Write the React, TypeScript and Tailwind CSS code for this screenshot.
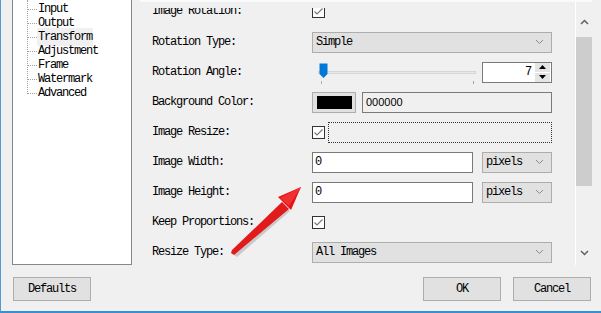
import React from "react";

function Chevron() {
  return (
    <svg width="9" height="6" viewBox="0 0 9 6" className="shrink-0">
      <polyline points="1,1 4.5,4.5 8,1" fill="none" stroke="#8a8a8a" strokeWidth="1" />
    </svg>
  );
}

function Select({ text, w }: { text: string; w: string }) {
  return (
    <div className={`${w} h-[21px] border border-[#adadad] bg-[#e1e1e1] flex items-center justify-between pl-[3px] pr-[7px]`}>
      <span>{text}</span>
      <Chevron />
    </div>
  );
}

function Check() {
  return (
    <div className="w-[13px] h-[13px] border border-[#333333] bg-white flex items-center justify-center shrink-0">
      <svg width="11" height="11" viewBox="0 0 11 11">
        <polyline points="1.5,5.5 4,8 9.5,2.5" fill="none" stroke="#7a7a7a" strokeWidth="1.2" />
      </svg>
    </div>
  );
}

function Row({ label, children }: { label: string; children?: React.ReactNode }) {
  return (
    <div className="h-[30px] flex items-center shrink-0">
      <div className="w-[160px] shrink-0">{label}</div>
      <div className="w-[240px] flex items-center">{children}</div>
    </div>
  );
}

function Btn({ text }: { text: string }) {
  return (
    <div className="w-[78px] h-[24px] border border-[#adadad] bg-[#e1e1e1] flex items-center justify-center">
      {text}
    </div>
  );
}

export default function App() {
  const tree = ["Input", "Output", "Transform", "Adjustment", "Frame", "Watermark", "Advanced"];
  return (
    <div
      className="relative w-[601px] h-[313px] bg-[#f0f0f0] overflow-hidden border-l border-l-[#4f9ad6] border-b-2 border-b-[#3a8fd0] text-black text-[12px] tracking-[-1.2px] flex flex-col"
      style={{ fontFamily: '"Liberation Mono", "DejaVu Sans Mono", monospace' }}
    >
      <div className="flex h-[265px] shrink-0">
        {/* tree */}
        <div className="ml-[11px] w-[120px] h-[265px] bg-white border border-t-0 border-[#828790] relative">
          <div className="absolute left-[14px] top-0 h-[94px] border-l border-dotted border-[#a0a0a0]" />
          <div className="pt-[2px] flex flex-col">
            {tree.map((t) => (
              <div key={t} className="h-[14px] flex items-center">
                <div className="ml-[15px] w-[9px] border-t border-dotted border-[#a0a0a0]" />
                <span className={`px-[1px] ${t === "Transform" ? "bg-[#f0f0f0]" : ""}`}>{t}</span>
              </div>
            ))}
          </div>
        </div>
        {/* options area */}
        <div className="ml-[8px] w-[452px] flex flex-col">
          <div className="h-[2px] bg-[#fafafa]" />
          <div className="flex flex-1 overflow-hidden">
            <div className="flex-1 flex flex-col">
              <div className="h-[6px] shrink-0" />
              <div className="flex-1 overflow-hidden pl-[12px] flex flex-col">
                <div className="mt-[-12px] flex flex-col">
                  <Row label="Image Rotation:">
                    <Check />
                  </Row>
                  <div className="h-[1px] shrink-0" />
                  <Row label="Rotation Type:">
                    <Select text="Simple" w="w-[240px]" />
                  </Row>
                  <Row label="Rotation Angle:">
                    <div className="w-[170px] h-[21px] relative flex items-center shrink-0">
                      <div className="ml-[6px] w-[158px] h-[3px] bg-[#e7eaea] border border-[#d6d6d6]" />
                      <svg className="absolute left-[7px] top-[1px]" width="9" height="16" viewBox="0 0 9 16">
                        <path d="M0.5 0.5 H8.5 V11 L4.5 15 L0.5 11 Z" fill="#0078d7" />
                      </svg>
                      <div className="absolute left-[9px] top-[19px] w-[1px] h-[3px] bg-[#c8a890]" />
                      <div className="absolute left-[161px] top-[19px] w-[1px] h-[3px] bg-[#a0a0a0]" />
                    </div>
                    <div className="w-[70px] h-[21px] border border-[#7a7a7a] bg-white flex items-center">
                      <span className="flex-1 text-right pr-[4px]">7</span>
                      <div className="w-[15px] h-[19px] flex flex-col gap-[1px] mr-[1px]">
                        <div className="flex-1 bg-[#e5e5e5] flex items-center justify-center">
                          <svg width="7" height="4" viewBox="0 0 7 4"><path d="M0 4 L3.5 0 L7 4 Z" fill="#000" /></svg>
                        </div>
                        <div className="flex-1 bg-[#e5e5e5] flex items-center justify-center">
                          <svg width="7" height="4" viewBox="0 0 7 4"><path d="M0 0 L3.5 4 L7 0 Z" fill="#000" /></svg>
                        </div>
                      </div>
                    </div>
                  </Row>
                  <Row label="Background Color:">
                    <div className="w-[44px] h-[21px] border border-[#adadad] bg-[#e1e1e1] flex items-center justify-center shrink-0">
                      <div className="w-[35px] h-[13px] bg-black" />
                    </div>
                    <div
                      className="ml-[6px] w-[190px] h-[21px] border border-[#7a7a7a] bg-[#f0f0f0] flex items-center pl-[3px] text-[11px] tracking-normal"
                      style={{ fontFamily: '"Liberation Sans", Arial, sans-serif' }}
                    >
                      000000
                    </div>
                  </Row>
                  <Row label="Image Resize:">
                    <Check />
                    <div className="ml-[3px] w-[224px] h-[21px] border border-dotted border-[#333]" />
                  </Row>
                  <Row label="Image Width:">
                    <div className="w-[161px] h-[21px] border border-[#7a7a7a] bg-white flex items-center pl-[2px]">0</div>
                    <div className="ml-[9px]"><Select text="pixels" w="w-[70px]" /></div>
                  </Row>
                  <Row label="Image Height:">
                    <div className="w-[161px] h-[21px] border border-[#7a7a7a] bg-white flex items-center pl-[2px]">0</div>
                    <div className="ml-[9px]"><Select text="pixels" w="w-[70px]" /></div>
                  </Row>
                  <Row label="Keep Proportions:">
                    <Check />
                  </Row>
                  <Row label="Resize Type:">
                    <Select text="All Images" w="w-[240px]" />
                  </Row>
                </div>
              </div>
            </div>
            {/* scrollbar */}
            <div className="w-[17px] border-l border-l-white flex flex-col items-center bg-[#f0f0f0]">
              <div className="h-[35px] flex items-center justify-center pt-[4px]">
                <svg width="9" height="6" viewBox="0 0 9 6"><polyline points="1,5 4.5,1.5 8,5" fill="none" stroke="#606060" strokeWidth="1.5" /></svg>
              </div>
              <div className="w-[16px] h-[149px] bg-[#cdcdcd]" />
              <div className="flex-1" />
              <div className="h-[20px] flex items-center justify-center mb-[2px]">
                <svg width="9" height="6" viewBox="0 0 9 6"><polyline points="1,1 4.5,4.5 8,1" fill="none" stroke="#606060" strokeWidth="1.5" /></svg>
              </div>
            </div>
          </div>
        </div>
      </div>
      {/* bottom buttons */}
      <div className="flex items-start pt-[12px] pl-[12px] pr-[10px]">
        <Btn text="Defaults" />
        <div className="flex-1" />
        <Btn text="OK" />
        <div className="ml-[12px]"><Btn text="Cancel" /></div>
      </div>
      {/* red arrow overlay */}
      <svg className="absolute left-0 top-0 pointer-events-none" width="601" height="313" viewBox="0 0 601 313">
        <polygon points="233,255 234,253 283,205 289,211 236,257" fill="#9a9a9a" opacity="0.45" />
        <polygon points="230,253 231,250 281,202 288,209 233,255" fill="#e11b1b" />
        <polygon points="300,187 290,210 277,197" fill="#e41414" />
        <polygon points="300,187 288,206 279,198" fill="#f03030" />
      </svg>
    </div>
  );
}
